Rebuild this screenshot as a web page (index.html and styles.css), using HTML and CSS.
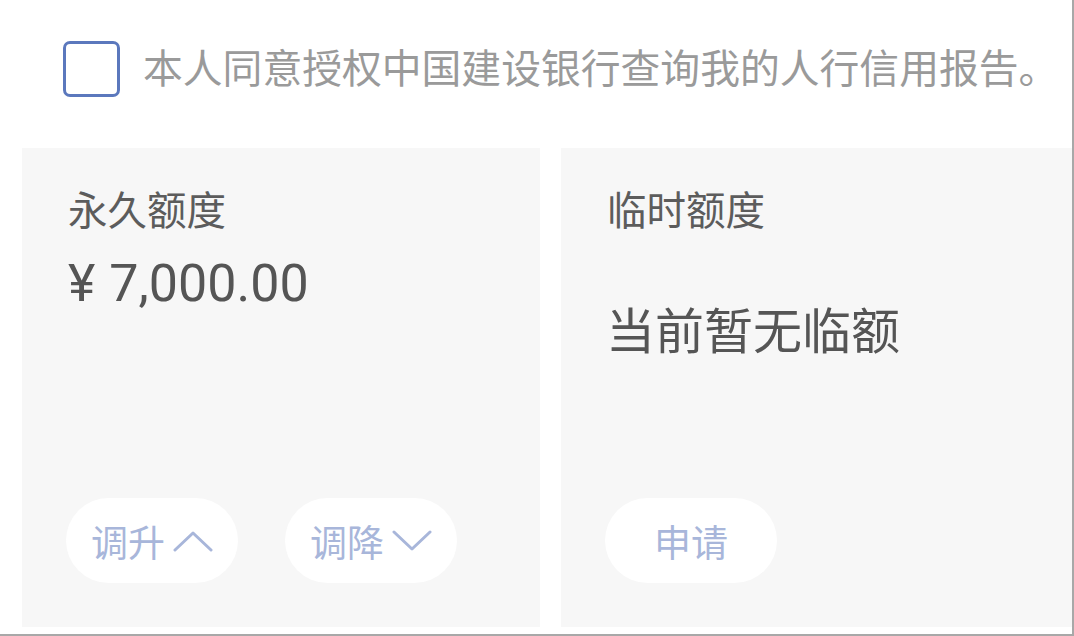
FILE: index.html
```html
<!DOCTYPE html>
<html lang="zh-CN">
<head>
<meta charset="utf-8">
<title>额度</title>
<link rel="stylesheet" href="styles.css">
</head>
<body>
<div class="frame">
  <div class="agree">
    <span class="checkbox"></span>
    <span class="agree-text">本人同意授权中国建设银行查询我的人行信用报告。</span>
  </div>
  <div class="cards">
    <div class="card card-left">
      <div class="label">永久额度</div>
      <div class="amount"><span class="yen">¥</span>7,000.00</div>
      <div class="actions">
        <button class="pill">调升<svg class="chev" viewBox="0 0 40 22" width="40" height="22"><polyline points="2,20 20,3 38,20"/></svg></button>
        <button class="pill">调降<svg class="chev" viewBox="0 0 40 22" width="40" height="22"><polyline points="2,2 20,19 38,2"/></svg></button>
      </div>
    </div>
    <div class="card card-right">
      <div class="label">临时额度</div>
      <div class="none">当前暂无临额</div>
      <div class="actions">
        <button class="pill">申请</button>
      </div>
    </div>
  </div>
</div>
</body>
</html>
```
FILE: styles.css
```css
html, body {
  margin: 0;
  padding: 0;
  background: #ffffff;
}
body {
  font-family: Roboto, "Noto Sans CJK SC", sans-serif;
}
.frame {
  box-sizing: border-box;
  width: 1074px;
  height: 636px;
  border-right: 2px solid #a8a8a8;
  border-bottom: 2px solid #a8a8a8;
  background: #ffffff;
  display: flex;
  flex-direction: column;
  overflow: hidden;
}
.agree {
  height: 148px;
  display: flex;
  align-items: center;
  padding-left: 63px;
  box-sizing: border-box;
  padding-bottom: 10px;
}
.checkbox {
  box-sizing: border-box;
  width: 57px;
  height: 56px;
  border: 3px solid #5b78bd;
  border-radius: 7px;
  flex: none;
}
.agree-text {
  margin-left: 23px;
  padding-bottom: 6px;
  font-family: "Noto Sans CJK SC", sans-serif;
  font-size: 39.8px;
  line-height: 1;
  color: #9a9a9a;
  white-space: nowrap;
}
.cards {
  display: flex;
  gap: 21px;
  padding-left: 22px;
  height: 479px;
}
.card {
  background: #f7f7f7;
  display: flex;
  flex-direction: column;
  padding: 40px 0 44px 44px;
  box-sizing: border-box;
}
.card-left {
  width: 518px;
  flex: none;
}
.card-right {
  flex: 1;
}
.label {
  font-family: "Noto Sans CJK SC", sans-serif;
  font-size: 39.5px;
  line-height: 40px;
  color: #5c5c5c;
  padding-left: 2px;
}
.amount {
  margin-top: 30px;
  font-size: 52px;
  line-height: 52px;
  color: #555555;
  padding-left: 2px;
}
.yen {
  margin-right: 14px;
}
.none {
  margin-top: 76px;
  font-family: "Noto Sans CJK SC", sans-serif;
  font-size: 49px;
  line-height: 48px;
  color: #555555;
  padding-left: 1px;
}
.actions {
  margin-top: auto;
  display: flex;
  gap: 47px;
}
.pill {
  width: 172px;
  height: 85px;
  border: none;
  border-radius: 43px;
  background: #ffffff;
  display: flex;
  align-items: center;
  justify-content: center;
  gap: 8px;
  padding: 0;
  font-family: "Noto Sans CJK SC", sans-serif;
  font-size: 37px;
  color: #a8b6da;
}
.chev {
  display: block;
  fill: none;
  stroke: #a8b6da;
  stroke-width: 3;
  stroke-linecap: round;
  stroke-linejoin: round;
}
```
